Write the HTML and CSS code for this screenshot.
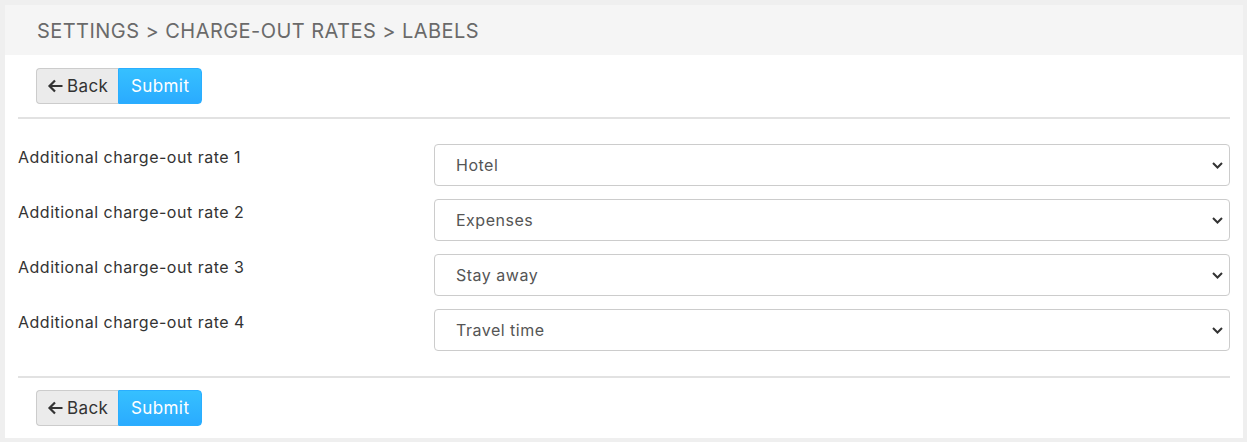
FILE: index.html
```html
<!DOCTYPE html>
<html>
<head>
<meta charset="utf-8">
<link rel="stylesheet" href="styles.css">
</head>
<body>
<div class="card">
  <div class="card-header">SETTINGS &gt; CHARGE-OUT RATES &gt; LABELS</div>
  <div class="card-body">
    <div class="btn-group">
      <button class="btn btn-back"><svg class="arrow" width="16" height="14" viewBox="0 0 16 14"><path d="M15.5 7H2.5M8 1.5L2.5 7L8 12.5" fill="none" stroke="#333" stroke-width="2.2"/></svg>Back</button>
      <button class="btn btn-submit">Submit</button>
    </div>
    <hr class="divider divider-top">
    <div class="form">
      <div class="row">
        <label class="label">Additional charge-out rate 1</label>
        <div class="select"><span>Hotel</span><svg class="chev" width="11" height="7" viewBox="0 0 11 7"><path d="M1 1l4.5 4.5L10 1" fill="none" stroke="#333" stroke-width="2"/></svg></div>
      </div>
      <div class="row">
        <label class="label">Additional charge-out rate 2</label>
        <div class="select"><span>Expenses</span><svg class="chev" width="11" height="7" viewBox="0 0 11 7"><path d="M1 1l4.5 4.5L10 1" fill="none" stroke="#333" stroke-width="2"/></svg></div>
      </div>
      <div class="row">
        <label class="label">Additional charge-out rate 3</label>
        <div class="select"><span>Stay away</span><svg class="chev" width="11" height="7" viewBox="0 0 11 7"><path d="M1 1l4.5 4.5L10 1" fill="none" stroke="#333" stroke-width="2"/></svg></div>
      </div>
      <div class="row">
        <label class="label">Additional charge-out rate 4</label>
        <div class="select"><span>Travel time</span><svg class="chev" width="11" height="7" viewBox="0 0 11 7"><path d="M1 1l4.5 4.5L10 1" fill="none" stroke="#333" stroke-width="2"/></svg></div>
      </div>
    </div>
    <hr class="divider divider-bottom">
    <div class="btn-group">
      <button class="btn btn-back"><svg class="arrow" width="16" height="14" viewBox="0 0 16 14"><path d="M15.5 7H2.5M8 1.5L2.5 7L8 12.5" fill="none" stroke="#333" stroke-width="2.2"/></svg>Back</button>
      <button class="btn btn-submit">Submit</button>
    </div>
  </div>
</div>
</body>
</html>
```
FILE: styles.css
```css
html, body {
  margin: 0;
  padding: 0;
}
body {
  background: #efefef;
  font-family: "Inter", "Liberation Sans", sans-serif;
  color: #333;
  padding: 5px 4px 4px 5px;
}
.card {
  background: #fff;
  height: 433px;
  box-sizing: border-box;
}
.card-header {
  background: #f5f5f5;
  height: 50px;
  box-sizing: border-box;
  padding: 14px 0 0 32px;
  font-size: 20px;
  line-height: 24px;
  letter-spacing: 0.45px;
  color: #6a6a6a;
}
.card-body {
  padding: 13px 13px 0 13px;
}
.btn-group {
  display: flex;
  padding-left: 18px;
}
.btn {
  font-family: inherit;
  font-size: 17px;
  letter-spacing: 0.4px;
  height: 36px;
  margin: 0;
  box-sizing: border-box;
  display: flex;
  align-items: center;
  cursor: pointer;
  padding-top: 1px;
}
.btn-back {
  width: 82px;
  background: #ebebeb;
  border: 1px solid #ccc;
  border-right: none;
  border-radius: 4px 0 0 4px;
  color: #333;
  padding-left: 10px;
}
.arrow {
  margin-right: 4px;
}
.btn-submit {
  width: 84px;
  background: linear-gradient(#36c0ff, #2aabff);
  border: 1px solid #2aaeff;
  border-radius: 0 4px 4px 0;
  color: #fff;
  padding-left: 12px;
}
.divider {
  border: 0;
  border-top: 2px solid #e2e2e2;
}
.divider-top {
  margin: 13px 0 25px 0;
}
.divider-bottom {
  margin: 25px 0 12px 0;
}
.form {
  display: flex;
  flex-direction: column;
  gap: 13px;
}
.row {
  display: grid;
  grid-template-columns: 416px 1fr;
}
.label {
  font-size: 16px;
  line-height: 24px;
  letter-spacing: 0.5px;
  padding-top: 1px;
  color: #333;
}
.select {
  height: 42px;
  box-sizing: border-box;
  border: 1px solid #ccc;
  border-radius: 4px;
  display: flex;
  align-items: center;
  justify-content: space-between;
  padding: 0 6px 0 21px;
  font-size: 16px;
  letter-spacing: 0.5px;
  color: #555;
}
.chev {
  margin-top: 1px;
}
```
